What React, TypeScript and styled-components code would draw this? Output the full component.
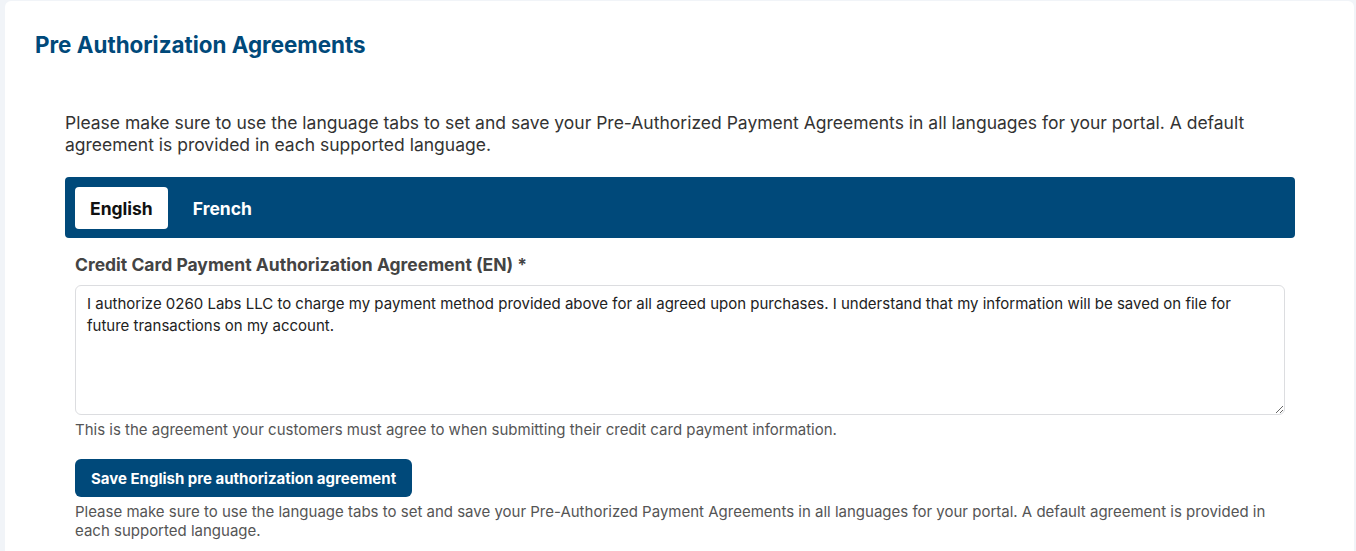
import styled, { createGlobalStyle } from "styled-components";

const GlobalStyle = createGlobalStyle`
  html, body {
    margin: 0;
    padding: 0;
    background: #f1f4f8;
    font-family: Inter, "Noto Sans", sans-serif;
  }
`;

const Page = styled.div`
  padding: 1px 2px 0 5px;
`;

const Card = styled.div`
  background: #ffffff;
  border-radius: 6px;
  padding: 31px 30px 20px 30px;
  min-height: 560px;
`;

const Title = styled.h2`
  margin: 0;
  font-size: 22.4px;
  font-weight: 700;
  color: #00497a;
  line-height: 26px;
`;

const Section = styled.div`
  padding: 54px 29px 0 30px;
`;

const Intro = styled.p`
  margin: 0 0 21px;
  font-size: 17.5px;
  line-height: 22px;
  color: #333;
`;

const TabBar = styled.div`
  display: flex;
  align-items: center;
  gap: 10px;
  background: #00497a;
  border-radius: 4px;
  padding: 10px 10px 9px;
`;

const Tab = styled.button<{ $active?: boolean }>`
  border: none;
  border-radius: 4px;
  height: 42px;
  padding: 0 15px;
  font-family: inherit;
  font-size: 17.5px;
  font-weight: 700;
  background: ${(p) => (p.$active ? "#ffffff" : "transparent")};
  color: ${(p) => (p.$active ? "#111" : "#ffffff")};
  cursor: pointer;
`;

const Form = styled.div`
  padding: 16px 10px 0;
`;

const Label = styled.label`
  display: block;
  font-size: 17.5px;
  font-weight: 700;
  color: #444;
  line-height: 22px;
  margin-bottom: 9px;
`;

const TextArea = styled.textarea`
  display: block;
  box-sizing: border-box;
  width: 100%;
  height: 130px;
  border: 1px solid #dcdde0;
  border-radius: 6px;
  padding: 7px 11px;
  font-family: inherit;
  font-size: 15px;
  line-height: 22px;
  color: #222;
  resize: vertical;
`;

const Help = styled.p`
  margin: 5px 0 0;
  font-size: 15px;
  line-height: 20px;
  color: #555;
`;

const SaveButton = styled.button`
  margin-top: 19px;
  background: #00497a;
  color: #ffffff;
  border: none;
  border-radius: 6px;
  height: 38px;
  padding: 0 16px;
  font-family: inherit;
  font-size: 15px;
  font-weight: 700;
  cursor: pointer;
`;

const Note = styled(Help)`
  margin-top: 5px;
  line-height: 19px;
`;

const agreement =
  "I authorize 0260 Labs LLC to charge my payment method provided above for all agreed upon purchases. I understand that my information will be saved on file for future transactions on my account.";

const notice =
  "Please make sure to use the language tabs to set and save your Pre-Authorized Payment Agreements in all languages for your portal. A default agreement is provided in each supported language.";

export default function App() {
  return (
    <>
      <GlobalStyle />
      <Page>
        <Card>
          <Title>Pre Authorization Agreements</Title>
          <Section>
            <Intro>{notice}</Intro>
            <TabBar>
              <Tab $active>English</Tab>
              <Tab>French</Tab>
            </TabBar>
            <Form>
              <Label>Credit Card Payment Authorization Agreement (EN) *</Label>
              <TextArea defaultValue={agreement} />
              <Help>
                This is the agreement your customers must agree to when submitting their credit card payment information.
              </Help>
              <SaveButton>Save English pre authorization agreement</SaveButton>
              <Note>{notice}</Note>
            </Form>
          </Section>
        </Card>
      </Page>
    </>
  );
}
